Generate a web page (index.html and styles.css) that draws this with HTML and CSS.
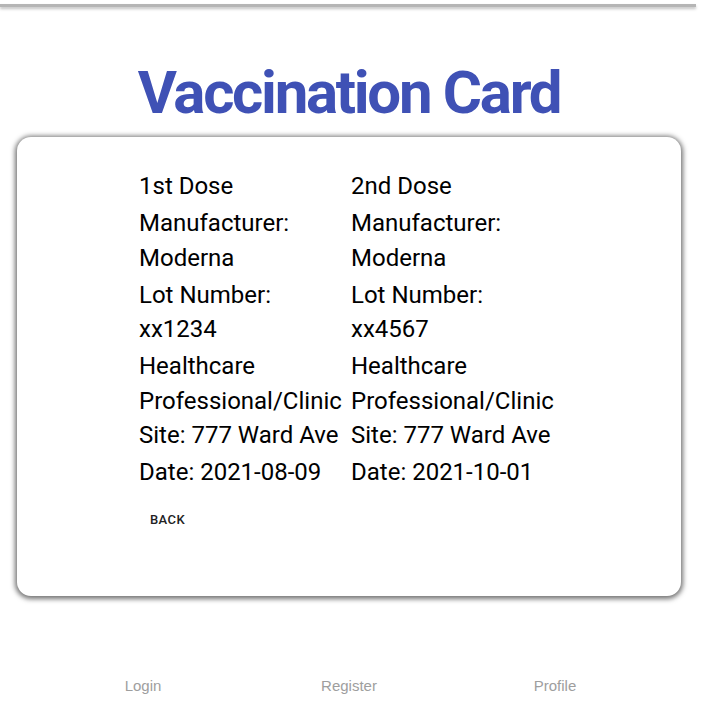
FILE: index.html
```html
<!DOCTYPE html>
<html>
<head>
<meta charset="utf-8">
<link rel="stylesheet" href="styles.css">
</head>
<body>
<div class="page">
  <div class="topbar"></div>
  <h1 class="title">Vaccination Card</h1>
  <div class="card">
    <div class="doses">
      <div class="dose">
        <p>1st Dose</p>
        <p>Manufacturer: Moderna</p>
        <p>Lot Number: xx1234</p>
        <p>Healthcare Professional/Clinic Site: 777 Ward Ave</p>
        <p>Date: 2021-08-09</p>
      </div>
      <div class="dose">
        <p>2nd Dose</p>
        <p>Manufacturer: Moderna</p>
        <p>Lot Number: xx4567</p>
        <p>Healthcare Professional/Clinic Site: 777 Ward Ave</p>
        <p>Date: 2021-10-01</p>
      </div>
    </div>
    <div class="actions">
      <button class="back">Back</button>
    </div>
  </div>
  <nav class="footer">
    <a class="link">Login</a>
    <a class="link">Register</a>
    <a class="link">Profile</a>
  </nav>
</div>
</body>
</html>
```
FILE: styles.css
```css
html, body {
  margin: 0;
  padding: 0;
  background: #ffffff;
}
.page {
  width: 698px;
  font-family: Roboto, "Liberation Sans", sans-serif;
}
.topbar {
  margin-top: 4px;
  width: 696px;
  height: 3px;
  background: #b5b5b5;
  box-shadow: 0 2px 3px rgba(0, 0, 0, 0.25);
}
.title {
  margin: 50px 0 0 0;
  text-align: center;
  font-family: Roboto, sans-serif;
  font-weight: 700;
  font-size: 60px;
  line-height: 72px;
  letter-spacing: -2.3px;
  color: #3f51b5;
}
.card {
  margin: 8px 17px 0 17px;
  height: 459px;
  box-sizing: border-box;
  border-radius: 14px;
  background: #fff;
  box-shadow: 0 1px 5px 2px rgba(0, 0, 0, 0.55);
  padding-top: 32px;
  padding-right: 2px;
}
.doses {
  display: grid;
  grid-template-columns: 206px 206px;
  column-gap: 6px;
  justify-content: center;
}
.dose p {
  margin: 0 0 2.5px 0;
  font-size: 24px;
  line-height: 34.5px;
  color: #000;
}
.actions {
  display: flex;
  padding-left: 122px;
  padding-top: 10px;
}
.back {
  border: none;
  background: none;
  padding: 6px 11px;
  font-family: Roboto, sans-serif;
  font-weight: 500;
  font-size: 13px;
  line-height: 24px;
  letter-spacing: 0.4px;
  text-transform: uppercase;
  color: #222;
}
.footer {
  display: grid;
  grid-template-columns: repeat(3, 206px);
  justify-content: center;
  margin-top: 80px;
}
.link {
  text-align: center;
  font-family: "Liberation Sans", Arial, sans-serif;
  font-size: 15px;
  line-height: 20px;
  color: #9e9e9e;
}
```
